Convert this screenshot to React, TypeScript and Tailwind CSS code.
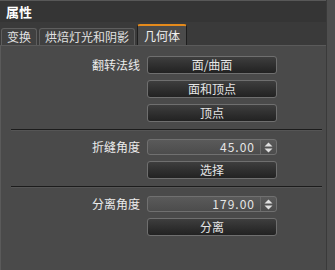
const font = { fontFamily: '"Noto Sans CJK SC", "Noto Sans", sans-serif' };

function Btn({ label }: { label: string }) {
  return (
    <button className="w-[130px] h-[18px] rounded-[3px] border border-[#6f6f6f] bg-gradient-to-b from-[#3e3e3e] to-[#222222] text-[12px] leading-none text-[#e6e6e6] flex items-center justify-center">
      {label}
    </button>
  );
}

function Spinner({ value }: { value: string }) {
  return (
    <div className="w-[130px] h-[16px] rounded-[3px] border border-[#707070] bg-gradient-to-b from-[#5a5a5a] to-[#4c4c4c] flex items-center">
      <span className="flex-1 text-right pr-[5px] text-[12px] leading-none text-[#e6e6e6] tracking-[1px]">{value}</span>
      <div className="w-[16px] h-full border-l border-[#6a6a6a] flex items-center justify-center">
        <svg width="9" height="11" viewBox="0 0 9 11">
          <path d="M4.5 0.5 L8.5 4.5 L0.5 4.5 Z" fill="#e0e0e0" />
          <path d="M0.5 6.5 L8.5 6.5 L4.5 10.5 Z" fill="#e0e0e0" />
        </svg>
      </div>
    </div>
  );
}

function Row({ label, children }: { label?: string; children: React.ReactNode }) {
  return (
    <div className="flex items-center gap-[7px]">
      <span className="w-[139px] text-right text-[12px] leading-none text-[#ececec]">{label}</span>
      {children}
    </div>
  );
}

function Sep() {
  return <div className="ml-[10px] mr-[4px] h-[2px] border-t border-[#1c1c1c] border-b border-b-[#555555]" />;
}

export default function App() {
  return (
    <div className="w-[335px] h-[270px] flex bg-[#484848]" style={font}>
      <div className="flex-1 flex flex-col">
        {/* Header */}
        <div className="h-[22px] border-t border-[#585858] bg-[#353535] flex items-center pl-[6px]">
          <span className="text-[13px] font-bold text-white leading-none">属性</span>
        </div>

        {/* Tabs */}
        <div className="h-[23px] bg-[#3a3a3a] flex items-end pl-[1px] gap-[2px]">
          <div className="h-[17px] px-[5px] rounded-t-[3px] border border-b-0 border-[#5e5e5e] bg-[#404040] text-[12px] leading-none text-[#e0e0e0] flex items-center">
            变换
          </div>
          <div className="h-[17px] px-[5px] rounded-t-[3px] border border-b-0 border-[#5e5e5e] bg-[#404040] text-[12px] leading-none text-[#e0e0e0] flex items-center">
            烘焙灯光和阴影
          </div>
          <div className="h-[21px] px-[6px] rounded-t-[3px] border-x border-[#1e1e1e] border-t-2 border-t-[#e48a1c] bg-[#4b4b4b] text-[12px] leading-none text-[#f0f0f0] flex items-center">
            几何体
          </div>
        </div>

        {/* Panel */}
        <div className="flex-1 border-t border-l border-[#5a5a5a] bg-[#4a4a4a] pt-[10px] flex flex-col">
          <div className="flex flex-col gap-[6px]">
            <Row label="翻转法线">
              <Btn label="面/曲面" />
            </Row>
            <Row>
              <Btn label="面和顶点" />
            </Row>
            <Row>
              <Btn label="顶点" />
            </Row>
          </div>

          <div className="mt-[7px]">
            <Sep />
          </div>

          <div className="mt-[8px] flex flex-col gap-[6px]">
            <Row label="折缝角度">
              <Spinner value="45.00" />
            </Row>
            <Row>
              <Btn label="选择" />
            </Row>
          </div>

          <div className="mt-[7px]">
            <Sep />
          </div>

          <div className="mt-[8px] flex flex-col gap-[6px]">
            <Row label="分离角度">
              <Spinner value="179.00" />
            </Row>
            <Row>
              <Btn label="分离" />
            </Row>
          </div>
        </div>
      </div>

      {/* Right strip */}
      <div className="w-[9px] border-l border-[#3a3a3a] bg-[#4e4e4e]" />
    </div>
  );
}
